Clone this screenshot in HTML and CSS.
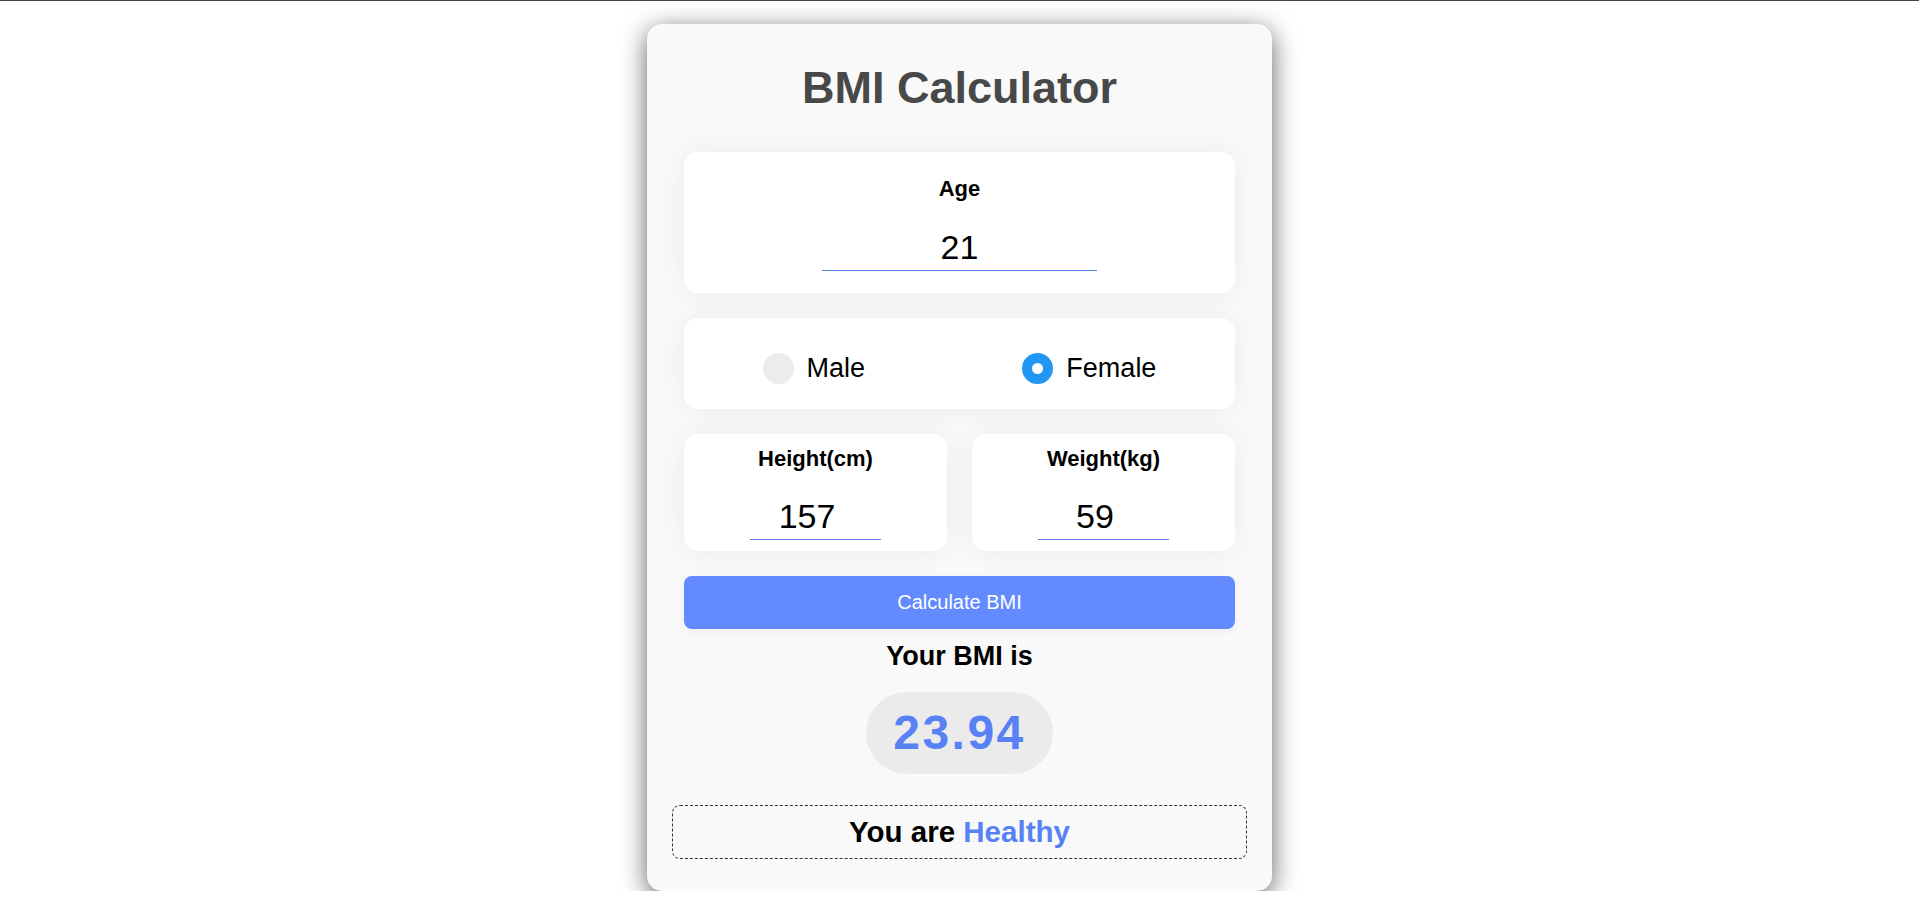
FILE: index.html
```html
<!DOCTYPE html>
<html lang="en">
<head>
<meta charset="utf-8">
<title>BMI Calculator</title>
<link rel="stylesheet" href="styles.css">
</head>
<body>
<div class="page">
  <main class="card">
    <h1 class="title">BMI Calculator</h1>
    <div class="form">
      <section class="panel field field-age">
        <label class="field-label" for="age">Age</label>
        <input class="field-input" id="age" type="text" value="21">
      </section>
      <section class="panel gender">
        <label class="option"><input class="radio" type="radio" name="gender"> <span>Male</span></label>
        <label class="option"><input class="radio" type="radio" name="gender" checked> <span>Female</span></label>
      </section>
      <div class="row">
        <section class="panel field">
          <label class="field-label" for="height">Height(cm)</label>
          <input class="field-input field-input-num" id="height" type="text" value="157">
        </section>
        <section class="panel field">
          <label class="field-label" for="weight">Weight(kg)</label>
          <input class="field-input field-input-num" id="weight" type="text" value="59">
        </section>
      </div>
      <button class="calc" type="button">Calculate BMI</button>
    </div>
    <p class="result-label">Your BMI is</p>
    <div class="bmi-pill">23.94</div>
    <p class="status">You are <span class="accent">Healthy</span></p>
  </main>
</div>
</body>
</html>
```

FILE: styles.css
```css
html {
  border-top: 1px solid #444;
  background: #fff;
}
body {
  margin: 0;
  font-family: "Liberation Sans", Arial, sans-serif;
  color: #000;
}
.page {
  padding-top: 23px;
  display: flex;
  justify-content: center;
}
.card {
  width: 625px;
  box-sizing: border-box;
  padding: 38px 37px 32px;
  background: #f9f9f9;
  border-radius: 15px;
  box-shadow: 0 6px 26px rgba(0, 0, 0, 0.62);
  display: flex;
  flex-direction: column;
  align-items: center;
}
.title {
  margin: 0 0 38px;
  font-size: 45px;
  font-weight: bold;
  color: #484848;
  line-height: normal;
}
.form {
  align-self: stretch;
  display: flex;
  flex-direction: column;
  gap: 25px;
}
.panel {
  background: #fff;
  border-radius: 14px;
  box-shadow: 0 0 28px rgba(0, 0, 0, 0.06);
}
.field {
  padding: 13px 0 11px;
  display: flex;
  flex-direction: column;
  align-items: center;
}
.field-age {
  padding: 25px 0 22px;
}
.field-label {
  font-size: 22px;
  font-weight: bold;
  line-height: 24px;
  margin-bottom: 26px;
}
.field-age .field-label {
  margin-bottom: 27px;
}
.field-input {
  width: 50%;
  box-sizing: border-box;
  border: none;
  border-bottom: 1px solid #5b7fe8;
  background: transparent;
  padding: 0 0 3px;
  margin: 0;
  font-family: inherit;
  font-size: 34px;
  text-align: center;
  color: #000;
  outline: none;
}
.field-input-num {
  padding-right: 17px;
}
.gender {
  padding: 35px 0 25px;
  display: flex;
  justify-content: space-around;
  align-items: center;
}
.option {
  display: flex;
  align-items: center;
  gap: 13px;
  font-size: 27px;
  line-height: 31px;
}
.radio {
  appearance: none;
  -webkit-appearance: none;
  margin: 0;
  width: 31px;
  height: 31px;
  border-radius: 50%;
  background: #ececec;
  box-sizing: border-box;
}
.radio:checked {
  background: #fff;
  border: 10px solid #2196f3;
}
.row {
  display: flex;
  gap: 25px;
}
.row .panel {
  flex: 1;
}
.calc {
  height: 53px;
  border: none;
  border-radius: 8px;
  background: #638bff;
  color: #fff;
  font-family: inherit;
  font-size: 20px;
  box-shadow: 0 2px 10px rgba(0, 0, 0, 0.05);
}
.result-label {
  margin: 12px 0 0;
  font-size: 27px;
  font-weight: bold;
  line-height: 31px;
}
.bmi-pill {
  margin-top: 20px;
  height: 82px;
  padding: 0 27px;
  border-radius: 41px;
  background: #ebebeb;
  color: #5781f5;
  font-size: 48px;
  font-weight: bold;
  line-height: 82px;
  letter-spacing: 2.5px;
}
.status {
  align-self: stretch;
  margin: 31px -12px 0;
  height: 54px;
  box-sizing: border-box;
  border: 1px dashed #333;
  border-radius: 8px;
  font-size: 29.5px;
  font-weight: bold;
  line-height: 52px;
  text-align: center;
}
.accent {
  color: #5781f5;
}
```
